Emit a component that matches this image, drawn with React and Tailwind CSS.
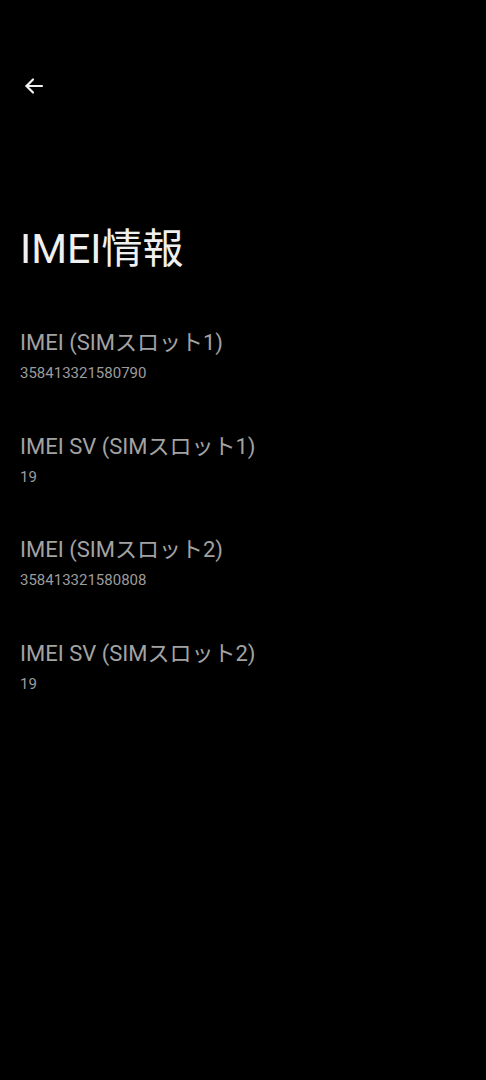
import React from 'react';

const items = [
  { label: 'IMEI (SIMスロット1)', value: '358413321580790' },
  { label: 'IMEI SV (SIMスロット1)', value: '19' },
  { label: 'IMEI (SIMスロット2)', value: '358413321580808' },
  { label: 'IMEI SV (SIMスロット2)', value: '19' },
];

const font = { fontFamily: 'Roboto, "Noto Sans CJK JP", sans-serif' };

export default function App() {
  return (
    <div className="min-h-[1080px] w-full bg-black text-white" style={font}>
      <div className="px-[22px] pt-[74px]">
        <svg width="24" height="24" viewBox="0 0 24 24" fill="none" stroke="#f2f2f2" strokeWidth="2.2" strokeLinecap="round" strokeLinejoin="round">
          <path d="M20 12H4.5" />
          <path d="M11 5.5L4.5 12l6.5 6.5" />
        </svg>
      </div>
      <h1 className="mt-[124px] px-[20px] text-[41px] leading-[54px] font-normal text-[#f0f0f0]">IMEI情報</h1>
      <div className="mt-[52px] flex flex-col px-[20px]">
        {items.map((it, i) => (
          <div key={i} className="flex h-[103.5px] flex-col">
            <div className="text-[22px] leading-[30px] text-[#a3a3a3]">{it.label}</div>
            <div className="mt-[5px] text-[15px] leading-[20px] text-[#9c9c9c]">{it.value}</div>
          </div>
        ))}
      </div>
    </div>
  );
}
